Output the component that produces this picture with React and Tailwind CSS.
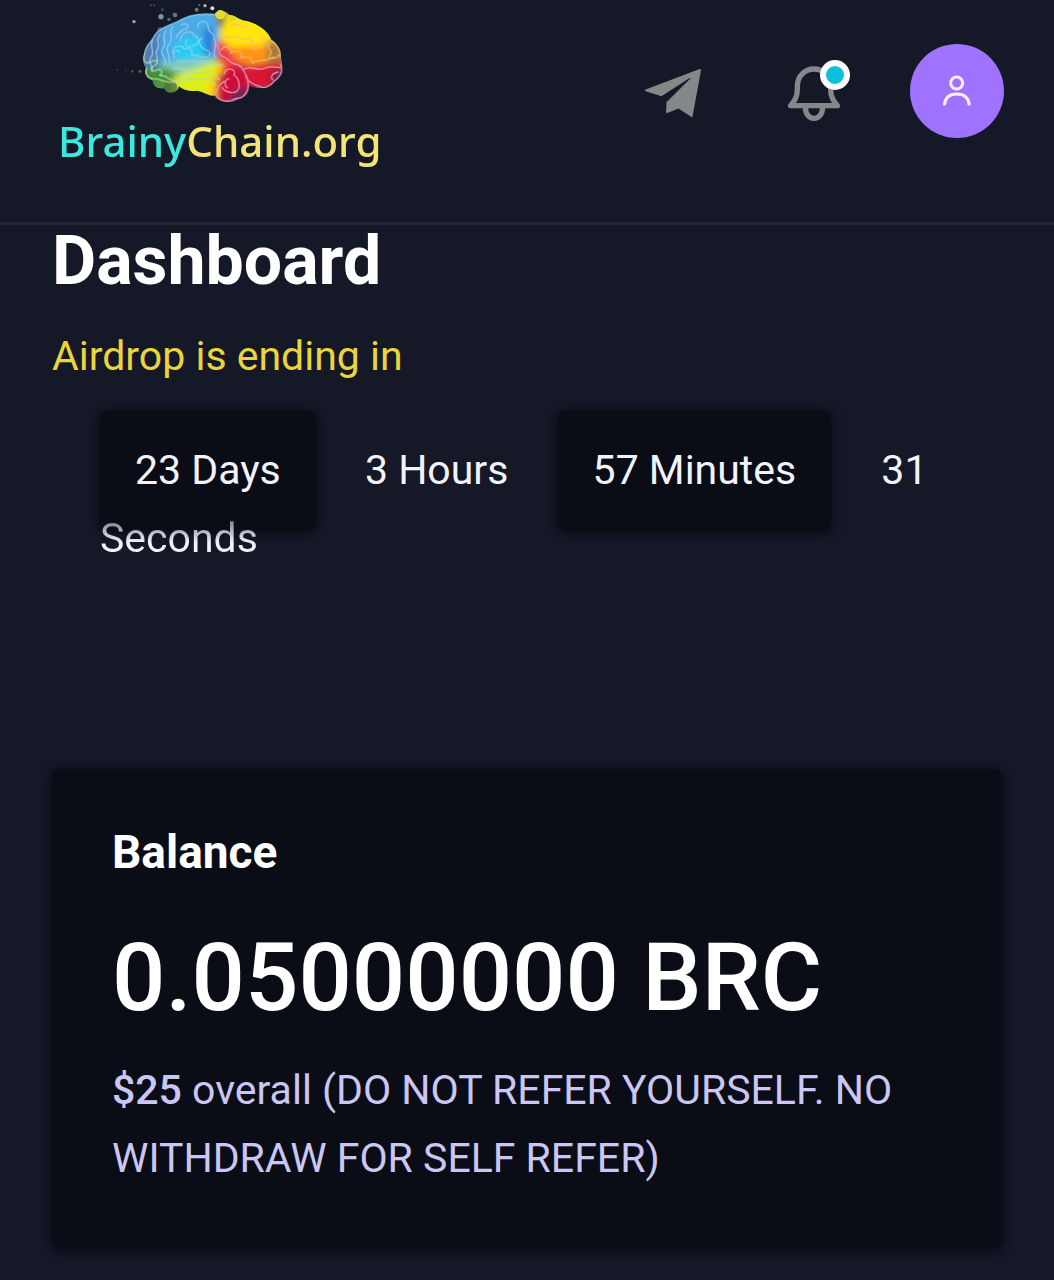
const countdown = [
  { value: 23, unit: "Days", boxed: true },
  { value: 3, unit: "Hours", boxed: false },
  { value: 57, unit: "Minutes", boxed: true },
];

const BrainLogo = () => (
  <svg viewBox="0 0 540 330" className="ml-13 h-[110px] w-[180px]" fill="none" aria-hidden="true">
    <defs>
      <filter id="soft" x="-30%" y="-30%" width="160%" height="160%">
        <feGaussianBlur stdDeviation="9" />
      </filter>
      <filter id="smooth">
        <feGaussianBlur stdDeviation="1.5" />
      </filter>
      <clipPath id="brain">
        <path d="M104 160C106 136 124 128 135 104C152 82 180 76 204 64C236 44 276 40 314 42C320 30 346 30 356 44C376 46 384 58 404 62C440 68 474 92 484 120C504 130 514 152 512 172C520 196 516 226 496 242C482 262 444 270 418 256C418 282 402 296 384 298C362 314 330 304 316 286C294 290 280 272 258 272C236 276 218 268 206 258C206 280 170 282 162 264C142 268 128 256 128 240C108 236 102 220 108 204C98 188 98 176 104 160Z" />
      </clipPath>
    </defs>

    {/* Splashes around the brain */}
    <g fill="#91aebb">
      <circle cx="72" cy="65" r="5" />
      <circle cx="153" cy="50" r="8" fill="#7c94ab" />
      <circle cx="195" cy="45" r="7" fill="#617582" />
      <circle cx="177" cy="58" r="5" fill="#536b86" />
      <circle cx="157" cy="29" r="4" fill="#46505c" />
      <circle cx="151" cy="91" r="9" fill="#42627c" />
      <circle cx="260" cy="29" r="6" fill="#6c7464" />
      <circle cx="285" cy="17" r="5" fill="#b6b7a8" />
      <circle cx="307" cy="25" r="6" fill="#e7e1a2" />
      <circle cx="268" cy="15" r="3" fill="#73786c" />
      <circle cx="123" cy="16" r="3" fill="#46505c" />
      <circle cx="133" cy="16" r="3" fill="#46505c" />
      <circle cx="67" cy="214" r="4" fill="#435339" />
      <circle cx="90" cy="214" r="5" fill="#526545" />
      <circle cx="22" cy="210" r="3" fill="#343b39" />
      <circle cx="48" cy="211" r="3" fill="#343b39" />
      <circle cx="182" cy="259" r="20" fill="#466638" />
      <circle cx="147" cy="250" r="14" fill="#4f7f40" />
      <circle cx="331" cy="42" r="12" fill="#e4dc27" />
    </g>

    <g clipPath="url(#brain)">
      <path d="M90 20H530V320H90Z" fill="#4ba6e2" />
      <g filter="url(#soft)">
        <path d="M90 90L160 60L170 190L90 220Z" fill="#527db4" />
        <path d="M150 90L240 40L320 40L325 150L260 190L150 200Z" fill="#4caae6" />
        <ellipse cx="245" cy="152" rx="55" ry="42" fill="#24cdf2" />
        <ellipse cx="296" cy="126" rx="17" ry="48" fill="#2c7ed8" />
        <path d="M150 190L310 172L330 188L220 225L150 215Z" fill="#86cdb4" />
        <path d="M90 200L165 205L215 225V290H90Z" fill="#3f8f36" />
        <path d="M185 235L315 183L345 195L318 310L205 285Z" fill="#dcf017" />
        <path d="M320 190L365 190L330 300L285 285Z" fill="#ffd20a" />
        <path d="M330 80L360 20L520 60V150L380 170L325 150Z" fill="#ffe60c" />
        <path d="M320 40H350L340 80L322 84Z" fill="#817733" />
        <path d="M330 142L490 136L500 182L400 205Z" fill="#ff9212" />
        <path d="M318 130L340 120L380 180L430 200L350 210L322 178Z" fill="#f03a47" />
        <path d="M470 122L525 118V202L474 200Z" fill="#a97a3c" />
        <path d="M340 205L395 195L418 305L318 315V245Z" fill="#ce1037" />
        <path d="M400 198L525 186V270H405Z" fill="#d81731" />
        <path d="M370 270L425 255V310H350Z" fill="#772454" />
        <path d="M482 218L525 205V260H482Z" fill="#64204c" />
      </g>
      <circle cx="182" cy="263" r="20" fill="#50733e" opacity="0.7" />
      <circle cx="150" cy="253" r="14" fill="#5c914a" opacity="0.7" />
      <circle cx="331" cy="42" r="16" fill="#e4dc27" />
      <circle cx="365" cy="52" r="12" fill="#e4d71e" />
    </g>

    {/* Folds */}
    <g strokeLinecap="round" strokeLinejoin="round" strokeWidth="4" filter="url(#smooth)">
      <g stroke="#9bd0f2" opacity="0.8">
        <path d="M104 160C106 136 124 128 135 104C152 82 180 76 204 64C236 44 276 40 312 44" />
        <path d="M263 84C262 54 298 60 294 82C292 98 318 98 313 118C324 138 306 154 314 174" />
        <path d="M212 122C208 96 248 86 254 108C268 110 270 132 248 138C230 144 218 130 232 120" />
        <path d="M188 158C190 134 218 134 222 148C238 140 252 150 244 166C262 160 268 176 284 172C302 172 306 156 288 150C270 142 260 122 276 114" />
        <path d="M194 174C184 154 202 146 212 158M200 184C234 178 264 194 304 180" />
        <path d="M150 104C132 124 154 130 142 148C130 164 150 170 139 188M168 92C152 112 174 128 158 146C145 160 174 174 164 194" />
        <path d="M188 80C172 102 194 112 178 132C162 148 182 166 178 188M128 118C116 146 138 152 122 174C110 192 134 198 126 214" />
        <path d="M214 74C238 66 240 82 224 88C208 92 204 104 198 112" />
      </g>
      <g stroke="#b9dda2" opacity="0.85">
        <path d="M104 160C96 186 108 196 130 182C144 176 146 190 134 196C112 206 126 218 140 210C158 204 160 220 148 226C180 226 174 246 204 244C242 238 238 218 278 216C300 214 322 228 328 240" />
        <path d="M110 204C102 224 118 240 140 236C166 244 180 252 206 242M188 206C218 202 244 218 270 202C288 192 314 196 334 194" />
        <path d="M226 248C240 232 260 240 282 236C304 234 308 250 318 256" />
      </g>
      <g stroke="#ffb968" opacity="0.8">
        <path d="M328 112C342 98 350 116 366 112C384 102 388 124 404 116C420 108 432 120 420 132C412 146 436 152 448 140" />
        <path d="M334 150C344 132 366 144 362 160C380 148 404 154 392 174C412 166 430 174 426 190C448 174 470 188 490 170" />
        <path d="M448 112C464 110 462 132 450 136M362 74C382 66 390 82 406 80" />
        <path d="M480 130C462 142 494 150 480 166C466 178 500 180 506 164M484 122C498 136 512 144 510 172" />
      </g>
      <g stroke="#f29ab5" opacity="0.9">
        <path d="M318 132C334 142 318 164 340 170C356 174 354 188 374 192C396 194 402 214 410 230C416 248 418 270 402 286C390 300 376 292 368 300C350 308 330 302 318 290" />
        <path d="M342 222C350 200 380 204 372 226C384 230 394 258 382 272C370 284 344 276 336 262M356 236C344 240 340 254 352 264" />
        <path d="M400 208C428 194 440 216 466 204C486 196 496 204 514 202M408 230C418 254 440 254 450 260C470 270 486 252 494 242C516 226 518 208 512 192" />
        <path d="M316 286C318 262 330 252 342 244M504 216C486 220 480 230 488 240" />
      </g>
    </g>
  </svg>
);

const PlaneIcon = () => (
  <svg viewBox="0 0 174 150" className="h-[50px] w-[58px]" fill="#858789" stroke="#858789" strokeWidth="6" strokeLinejoin="round" aria-hidden="true">
    <path d="M6 67L168 6L143 144L104 118L69 132L71 96L138 33L53 82Z" />
    {/* Crease between the wings */}
    <path d="M53 86L138 31L69 100" fill="#141827" stroke="#141827" strokeWidth="3" />
  </svg>
);

const BellIcon = () => (
  <svg viewBox="0 0 168 174" className="h-[58px] w-[56px]" fill="none" stroke="#85878a" strokeWidth="16" strokeLinejoin="round" aria-hidden="true">
    <path d="M14 125H154C143 111 134 100 134 76V67C134 36 112 15 84 15S34 36 34 67V76C34 100 25 111 14 125Z" />
    <path d="M58 128C58 151 70 163 84 163S110 151 110 128" />
  </svg>
);

const UserIcon = () => (
  <svg viewBox="0 0 90 96" className="h-[32px] w-[30px]" fill="none" stroke="#fbefff" strokeWidth="9" aria-hidden="true">
    <circle cx="44" cy="24" r="18" />
    <path d="M7 91C9 68 23 57 44 57S80 68 82 91" />
  </svg>
);

const Header = () => (
  <header className="flex h-[225px] items-start justify-between border-b-3 border-[#222a38] pr-[50px] pl-[58px]">
    <a href="#home" className="flex flex-col">
      <BrainLogo />
      <span className="font-['Noto_Sans','Open_Sans',sans-serif] text-[42px] leading-[62px] font-medium text-[#3ce8dd]">
        Brainy<span className="text-[#f3e478]">Chain.org</span>
      </span>
    </a>
    <nav className="mt-11 flex items-center">
      <a href="#telegram" aria-label="Telegram" className="mt-1 mr-[84px]">
        <PlaneIcon />
      </a>
      <button type="button" aria-label="Notifications" className="relative mr-[68px] mt-1">
        <BellIcon />
        <span className="absolute -top-1 -right-2 size-[30px] rounded-full border-6 border-white bg-[#0bc0dc]"></span>
      </button>
      <button type="button" aria-label="Account" className="flex size-[94px] items-center justify-center rounded-full bg-[#9f72ff]">
        <UserIcon />
      </button>
    </nav>
  </header>
);

const Countdown = () => (
  <p className="mt-[46px] pl-12 text-[#f2f3fb]">
    {countdown.map(({ value, unit, boxed }) => (
      <span key={unit}>
        <span className={`mr-1 rounded-lg px-[35px] py-9 ${boxed ? "bg-[#0a0d16] shadow-[0_2px_8px_2px_#0b0e18]" : ""}`}>
          {value} {unit}
        </span>{" "}
      </span>
    ))}
    <span className="pl-9">
      31{" "}
      <span className="bg-linear-to-b from-[#8b8e99] from-20% to-[#f2f3fb] to-60% bg-clip-text text-transparent">
        Seconds
      </span>
    </span>
  </p>
);

const App = () => {
  return (
    <div className="min-h-screen bg-[#141827] pb-8 font-[Roboto,sans-serif] text-[41px] leading-[68px] text-white">
      <Header />
      <main className="px-[52px]">
        <h1 className="text-[68px] leading-[72px] font-bold">Dashboard</h1>
        <p className="mt-[25px] text-[#ebd43c]">Airdrop is ending in</p>
        <Countdown />

        <section className="mt-[197px] rounded-lg bg-[#0a0d16] px-[60px] pt-[49px] pb-14 shadow-[0_2px_8px_2px_#0b0e18]">
          <h2 className="text-[46px] font-bold">Balance</h2>
          <p className="mt-9 text-[94px] leading-[112px] font-medium">0.05000000 BRC</p>
          <p className="mt-[22px] text-[#cbc6f2]">
            <strong className="font-medium">$25</strong> overall (DO NOT REFER YOURSELF. NO WITHDRAW FOR SELF REFER)
          </p>
        </section>
      </main>
    </div>
  );
};

export default App;
